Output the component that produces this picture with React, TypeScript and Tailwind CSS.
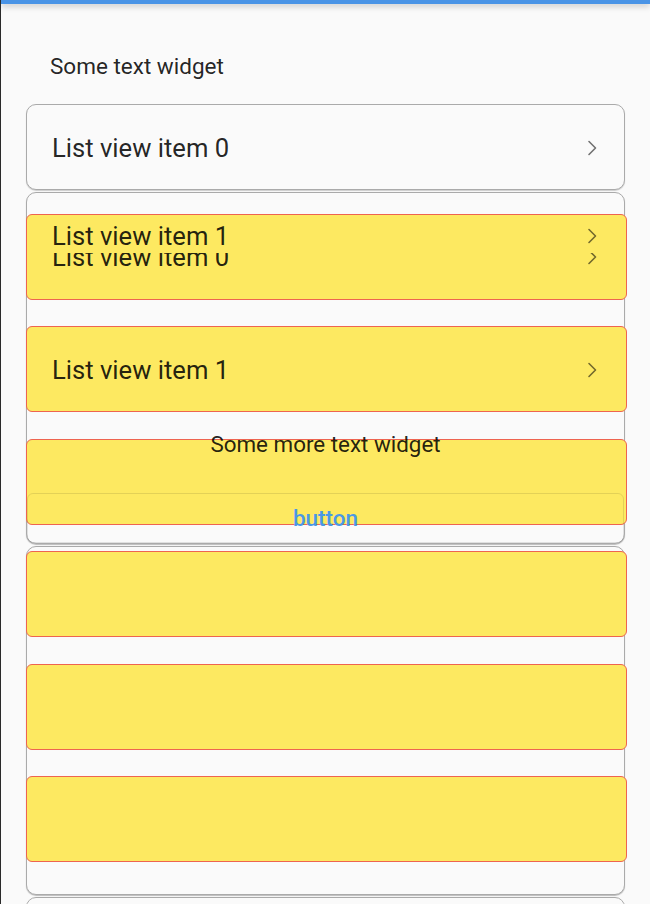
import React from "react";

function Chevron() {
  return (
    <svg width="10" height="16" viewBox="0 0 10 16" fill="none" className="shrink-0">
      <path d="M2 1.5 L8.5 8 L2 14.5" stroke="rgba(0,0,0,0.55)" strokeWidth="1.6" strokeLinecap="round" strokeLinejoin="round" />
    </svg>
  );
}

function Row({ label, className = "" }: { label: string; className?: string }) {
  return (
    <div className={`relative z-20 flex items-center justify-between pl-[25px] pr-[27px] ${className}`}>
      <span className="text-[25.6px] leading-[30px] text-[rgba(0,0,0,0.87)]">{label}</span>
      <Chevron />
    </div>
  );
}

export default function App() {
  return (
    <div
      className="relative w-[650px] h-[904px] overflow-hidden bg-[#fafafa] border-l border-[#2a2a2a]"
      style={{ fontFamily: "Roboto, 'Noto Sans', sans-serif" }}
    >
      <div className="h-[4px] bg-[#4a94e6] shadow-[0_2px_6px_rgba(0,0,0,0.25)]" />

      <div className="flex flex-col px-[25px]">
        <div className="pl-[24px] pt-[49px] pb-[25px] text-[22.5px] leading-[26px] text-[rgba(0,0,0,0.87)]">
          Some text widget
        </div>

        <div className="flex flex-col gap-[2px]">
          {/* Card 1 */}
          <div className="rounded-[10px] border border-[#aaaaaa] bg-[#fafafa] shadow-[0_1px_1px_rgba(0,0,0,0.18)]">
            <Row label="List view item 0" className="h-[84px] pt-[1px]" />
          </div>

          {/* Card 2 */}
          <div className="flex flex-col rounded-[10px] border border-[#aaaaaa] bg-[#fafafa] shadow-[0_1px_1px_rgba(0,0,0,0.25)]">
            <Row label="List view item 1" className="h-[86px]" />
            <div className="relative z-20 -mt-[26px] h-[74px] overflow-hidden">
              <Row label="List view item 0" className="h-[86px] -mt-[39px]" />
            </div>
            <Row label="List view item 1" className="h-[86px]" />
            <div className="relative z-20 mt-[18px] text-center text-[22.4px] leading-[26px] text-[rgba(0,0,0,0.87)]">
              Some more text widget
            </div>
            <div className="relative z-20 mt-[36px] flex h-[50px] items-center justify-center rounded-[6px] border border-[rgba(0,0,0,0.1)]">
              <span className="text-[22.5px] font-medium leading-[26px] text-[#4a98e6]">button</span>
            </div>
          </div>

          {/* Card 3 */}
          <div className="h-[349px] rounded-[10px] border border-[#aaaaaa] bg-[#fafafa] shadow-[0_1px_1px_rgba(0,0,0,0.25)]" />

          {/* Card 4 */}
          <div className="h-[60px] rounded-[10px] border border-[#aaaaaa] bg-[#fafafa]" />
        </div>
      </div>

      {/* Yellow overlay layer */}
      <div className="pointer-events-none absolute left-[25px] top-[214px] z-10 flex w-[601px] flex-col gap-[26.4px]">
        {[0, 1, 2, 3, 4, 5].map((i) => (
          <div key={i} className="h-[86px] rounded-[6px] border-[1.5px] border-[#ee6450] bg-[#fde961]" />
        ))}
      </div>
    </div>
  );
}
